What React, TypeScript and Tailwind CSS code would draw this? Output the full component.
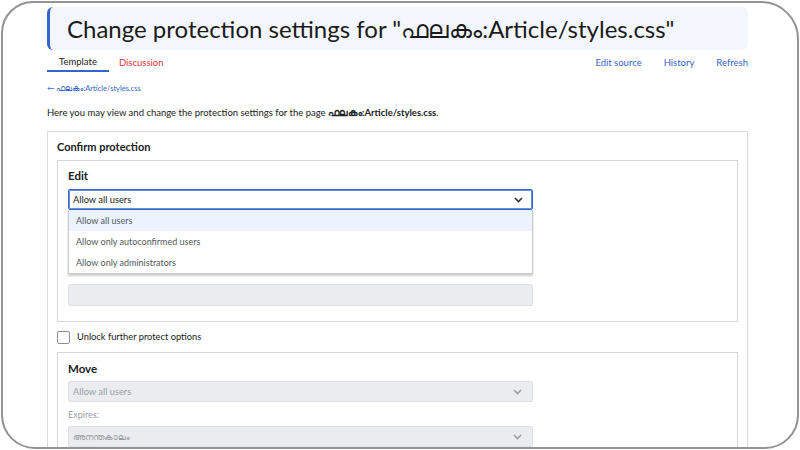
import React from "react";

function Chevron({ className }: { className?: string }) {
    return (
        <svg className={className} width="9" height="6" viewBox="0 0 9 6" fill="none">
            <path d="M1 1l3.5 3.5L8 1" stroke="currentColor" strokeWidth="1.6" />
        </svg>
    );
}

function DisabledSelect({ label }: { label: string }) {
    return (
        <div className="w-[465px] h-[21px] bg-[#eaecf0] border border-[#dfe1e5] rounded-[2px] flex items-center justify-between pl-[4px] pr-[10px] text-[9.3px] text-[#9a9ea4]">
            <span>{label}</span>
            <Chevron className="text-[#9a9ea4]" />
        </div>
    );
}

export default function App() {
    return (
        <div className="w-[800px] h-[450px] bg-white p-px">
            <div className="w-full h-full border-2 border-[#939393] rounded-tl-[32px] rounded-tr-[38px] rounded-b-[34px] overflow-hidden bg-white">
                <div className="ml-[44px] w-[701px] pt-[4px] font-['Lato','Noto_Sans',sans-serif] text-[#202122]">
                    {/* Heading */}
                    <div className="h-[43px] bg-[#f3f6fc] border-l-[3px] border-[#3366cc] rounded-[6px] pl-[17px] flex items-center">
                        <h1 className="text-[24px] leading-none text-[#1b1b1b] whitespace-nowrap">
                            Change protection settings for "ഫലകം:Article/styles.css"
                        </h1>
                    </div>

                    {/* Tabs */}
                    <div className="h-[22px] flex justify-between text-[9.5px]">
                        <div className="flex h-full">
                            <div className="h-full flex items-center pt-[5px] px-[12px] border-b-2 border-[#3366cc]">Template</div>
                            <div className="h-full flex items-center pt-[5px] px-[10px] text-[#dd3333]">Discussion</div>
                        </div>
                        <div className="flex h-full items-center pt-[5px] gap-[22px] text-[#3366cc]">
                            <span>Edit source</span>
                            <span>History</span>
                            <span>Refresh</span>
                        </div>
                    </div>

                    {/* Back link */}
                    <div className="mt-[12px] text-[7.5px] leading-[10px] text-[#3366cc]">← ഫലകം:Article/styles.css</div>

                    {/* Intro */}
                    <p className="mt-[12px] text-[9.5px] leading-[14px]">
                        Here you may view and change the protection settings for the page{" "}
                        <b>ഫലകം:Article/styles.css</b>.
                    </p>

                    {/* Confirm protection */}
                    <div className="mt-[11px] border border-[#dcdcdc] px-[9px] pt-[8px] pb-[20px]">
                        <div className="text-[11px] leading-[14px] font-bold">Confirm protection</div>

                        {/* Edit */}
                        <div className="mt-[6px] border border-[#d4d6da] pl-[10px] pt-[8px] pb-[15px]">
                            <div className="text-[11.5px] leading-[14px] font-bold">Edit</div>
                            <div className="relative mt-[6px] w-[465px]">
                                <div className="h-[21px] border border-[#3366cc] rounded-[2px] flex items-center justify-between pl-[4px] pr-[9px] text-[9.3px] shadow-[inset_0_0_0_1px_#6b8fd6]">
                                    <span>Allow all users</span>
                                    <Chevron className="text-[#333]" />
                                </div>
                                <div className="absolute left-0 top-[21px] w-[465px] bg-white border border-[#c8ccd1] border-t-0 shadow-[0_2px_2px_rgba(0,0,0,0.2)] z-10 text-[9px] text-[#54595d]">
                                    <div className="h-[21px] bg-[#eaf3ff] flex items-center pl-[7px]">Allow all users</div>
                                    <div className="h-[21px] flex items-center pl-[7px]">Allow only autoconfirmed users</div>
                                    <div className="h-[21px] flex items-center pl-[7px]">Allow only administrators</div>
                                </div>
                            </div>
                            {/* Expires field hidden under the open menu */}
                            <div className="h-[66px] flex items-end">
                                <div className="text-[9px] leading-[12px] text-[#72777d]">Other time:</div>
                            </div>
                            <div className="mt-[8px] w-[465px] h-[22px] bg-[#eaecf0] border border-[#dfe1e5] rounded-[2px]" />
                        </div>

                        {/* Unlock */}
                        <div className="mt-[8px] flex items-center gap-[7px] h-[14px]">
                            <div className="w-[13px] h-[13px] border border-[#8a8f96] rounded-[2px] bg-white" />
                            <span className="text-[9.3px]">Unlock further protect options</span>
                        </div>

                        {/* Move */}
                        <div className="mt-[8px] border border-[#d4d6da] pl-[10px] pt-[9px] pb-[14px]">
                            <div className="text-[11.5px] leading-[14px] font-bold">Move</div>
                            <div className="mt-[5px]">
                                <DisabledSelect label="Allow all users" />
                            </div>
                            <div className="mt-[6px] text-[9px] leading-[14px] text-[#9a9ea4]">Expires:</div>
                            <div className="mt-[4px]">
                                <DisabledSelect label="അനന്തകാലം" />
                            </div>
                        </div>
                    </div>
                </div>
            </div>
        </div>
    );
}
